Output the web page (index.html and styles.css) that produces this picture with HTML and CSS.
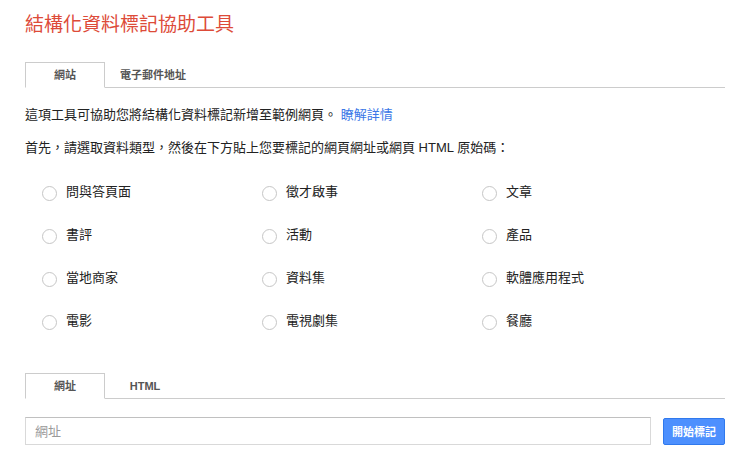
FILE: index.html
```html
<!DOCTYPE html>
<html lang="zh-Hant">
<head>
<meta charset="utf-8">
<title>結構化資料標記協助工具</title>
<link rel="stylesheet" href="styles.css">
</head>
<body>
<div class="page">
  <h1 class="title">結構化資料標記協助工具</h1>

  <div class="tabs">
    <div class="tab active">網站</div>
    <div class="tab">電子郵件地址</div>
  </div>

  <p class="intro">這項工具可協助您將結構化資料標記新增至範例網頁。 <a class="link" href="#">瞭解詳情</a></p>
  <p class="intro second">首先，請選取資料類型，然後在下方貼上您要標記的網頁網址或網頁 HTML 原始碼：</p>

  <div class="types">
    <label class="type"><span class="radio"></span>問與答頁面</label>
    <label class="type"><span class="radio"></span>徵才啟事</label>
    <label class="type"><span class="radio"></span>文章</label>
    <label class="type"><span class="radio"></span>書評</label>
    <label class="type"><span class="radio"></span>活動</label>
    <label class="type"><span class="radio"></span>產品</label>
    <label class="type"><span class="radio"></span>當地商家</label>
    <label class="type"><span class="radio"></span>資料集</label>
    <label class="type"><span class="radio"></span>軟體應用程式</label>
    <label class="type"><span class="radio"></span>電影</label>
    <label class="type"><span class="radio"></span>電視劇集</label>
    <label class="type"><span class="radio"></span>餐廳</label>
  </div>

  <div class="tabs lower">
    <div class="tab active">網址</div>
    <div class="tab">HTML</div>
  </div>

  <div class="url-row">
    <input class="url" type="text" placeholder="網址">
    <button class="start" type="button">開始標記</button>
  </div>
</div>
</body>
</html>
```

FILE: styles.css
```css
html, body {
  margin: 0;
  padding: 0;
  background: #fff;
}

body {
  font-family: "Liberation Sans", Arial, "Noto Sans CJK TC", sans-serif;
  color: #222;
  font-size: 13px;
}

.page {
  width: 700px;
  padding: 13px 25px 0 25px;
}

.title {
  margin: 0;
  font-size: 19px;
  line-height: 24px;
  font-weight: normal;
  color: #dd4b39;
}

.tabs {
  display: flex;
  margin-top: 25px;
  border-bottom: 1px solid #ccc;
}

.tab {
  box-sizing: border-box;
  min-width: 80px;
  height: 26px;
  line-height: 24px;
  padding: 0 14px;
  margin-bottom: -1px;
  text-align: center;
  font-size: 11px;
  font-weight: bold;
  color: #555;
  border: 1px solid transparent;
}

.tab.active {
  border-color: #ccc;
  border-bottom-color: #fff;
  background: #fff;
}

.intro {
  margin: 18px 0 0 0;
  line-height: 18px;
}

.intro.second {
  margin-top: 15px;
}

.link {
  color: #3b78e7;
  text-decoration: none;
}

.types {
  display: grid;
  grid-template-columns: 220px 220px 220px;
  grid-auto-rows: 43px;
  margin-top: 13px;
  padding-left: 17px;
}

.type {
  display: flex;
  align-items: center;
  gap: 9px;
  line-height: 18px;
}

.radio {
  box-sizing: border-box;
  width: 15px;
  height: 15px;
  border: 1px solid #c6c6c6;
  border-radius: 50%;
  background: #fff;
  margin-top: 3px;
}

.tabs.lower {
  margin-top: 31px;
}

.url-row {
  display: flex;
  align-items: center;
  gap: 12px;
  margin-top: 18px;
}

.url {
  box-sizing: border-box;
  width: 626px;
  height: 28px;
  margin: 0;
  padding: 0 9px;
  border: 1px solid #d9d9d9;
  border-top-color: #c0c0c0;
  font-family: "Liberation Sans", Arial, "Noto Sans CJK TC", sans-serif;
  font-size: 13px;
  color: #222;
  outline: none;
}

.url::placeholder {
  color: #999;
}

.start {
  box-sizing: border-box;
  width: 62px;
  height: 27px;
  margin: 0;
  padding: 0;
  border: 1px solid #3079ed;
  border-radius: 2px;
  background: #4d90fe;
  color: #fff;
  font-family: "Liberation Sans", Arial, "Noto Sans CJK TC", sans-serif;
  font-size: 11px;
  font-weight: bold;
}
```
